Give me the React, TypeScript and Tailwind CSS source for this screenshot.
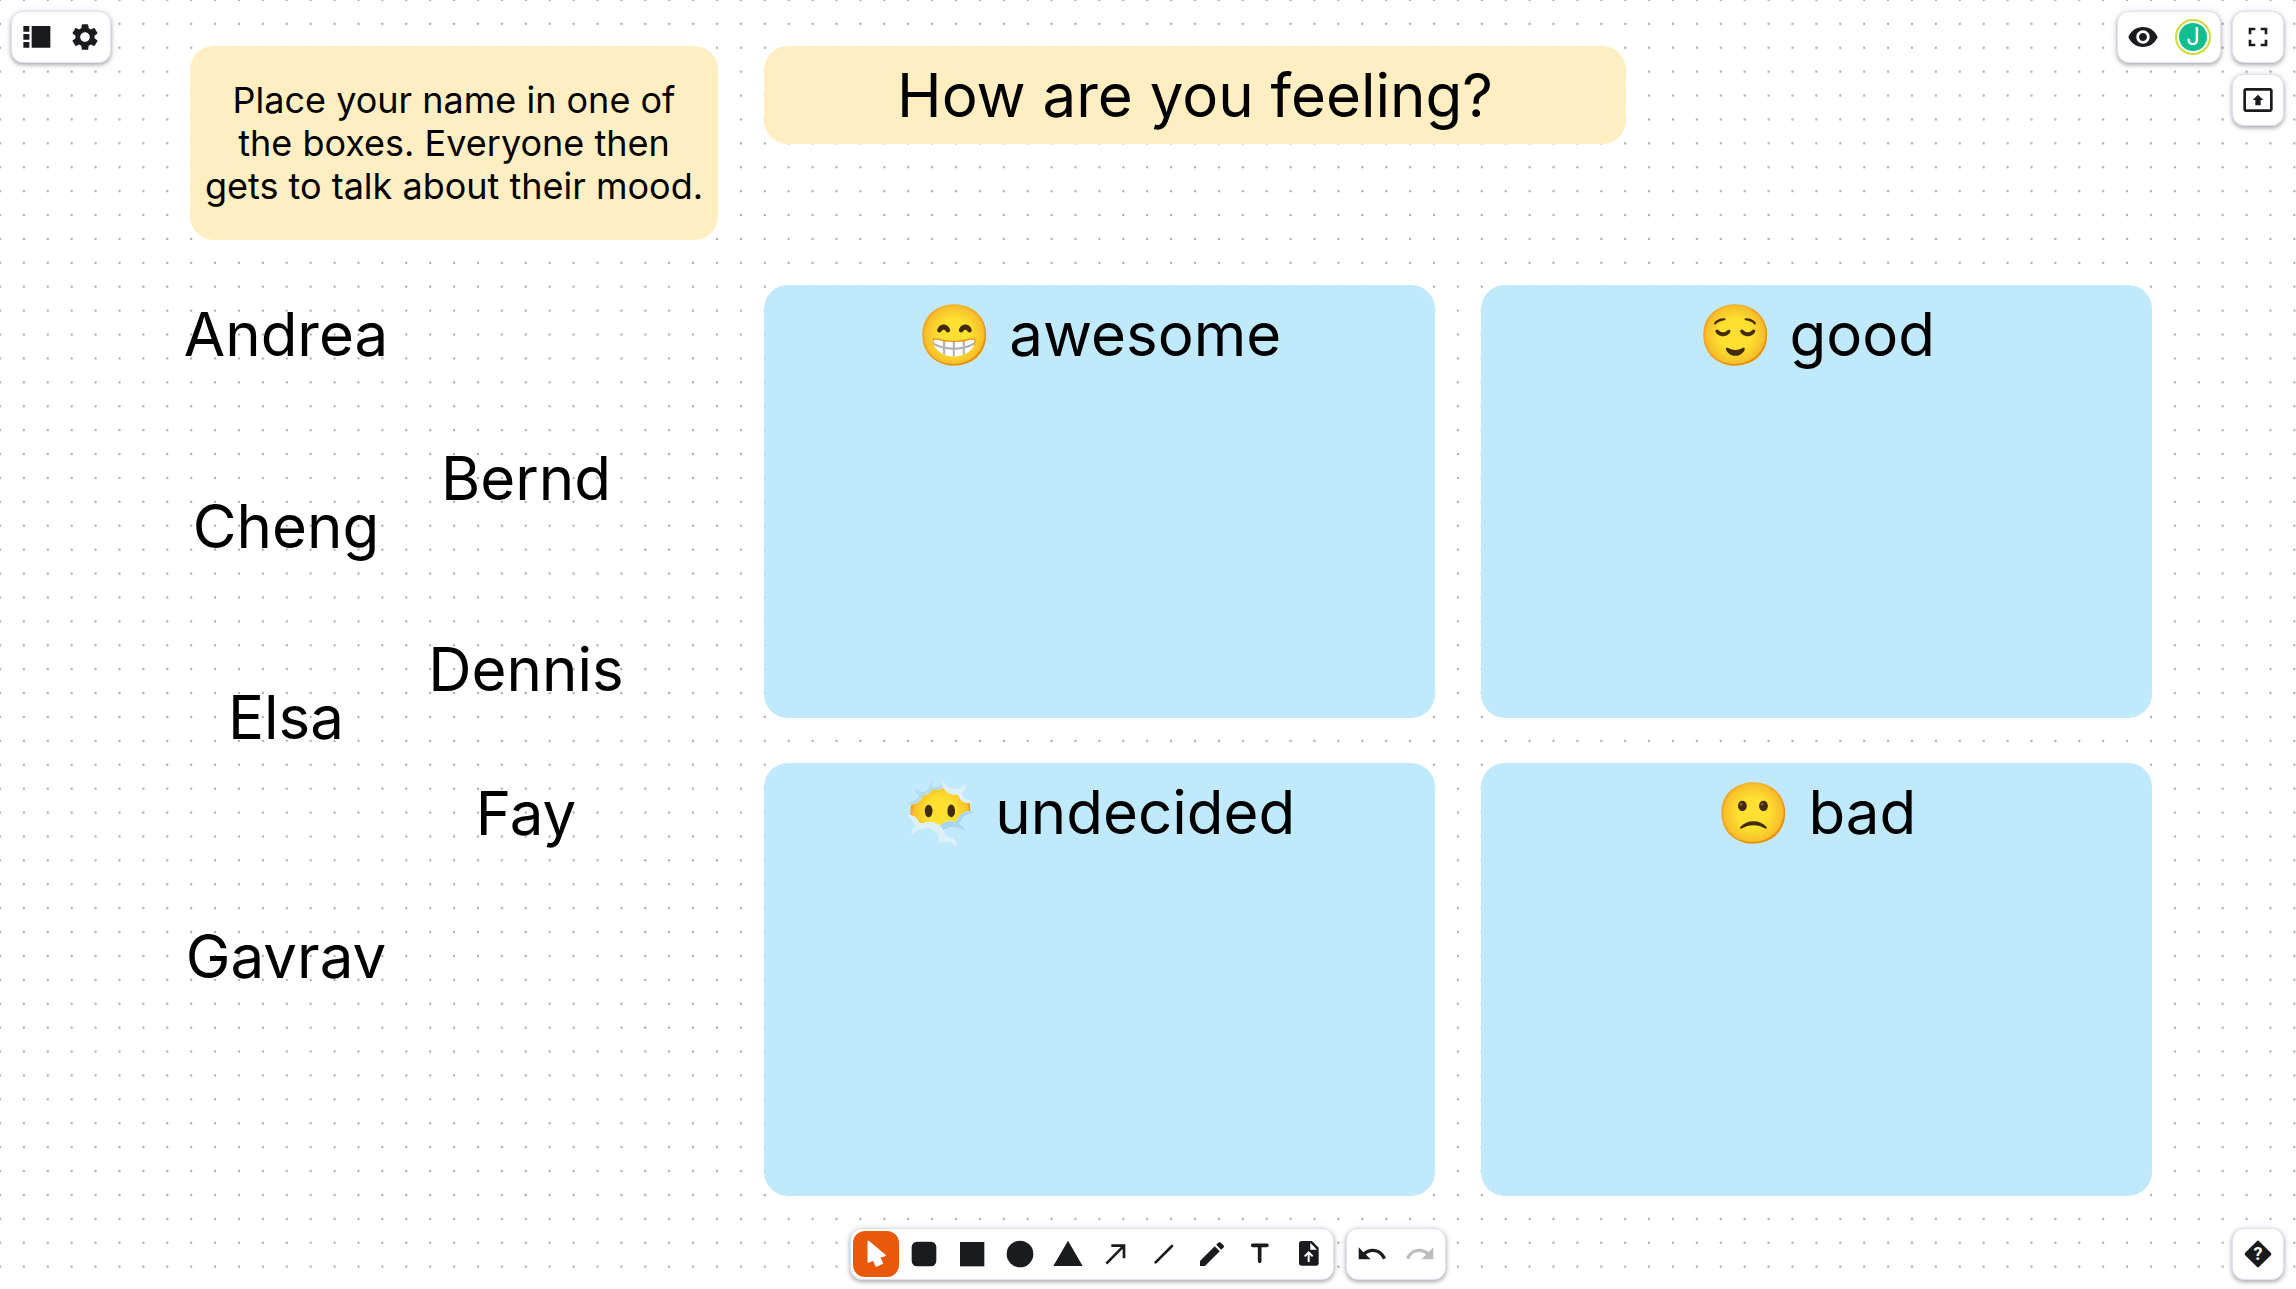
import type { ReactNode } from "react";
import {
  MdEdit,
  MdFullscreen,
  MdOutlinePresentToAll,
  MdRedo,
  MdSettings,
  MdUndo,
  MdVisibility,
} from "react-icons/md";

const names = [
  { name: "Andrea", place: "left-[190px] top-[298px]" },
  { name: "Bernd", place: "left-[430px] top-[442px]" },
  { name: "Cheng", place: "left-[190px] top-[490px]" },
  { name: "Dennis", place: "left-[430px] top-[633px]" },
  { name: "Elsa", place: "left-[190px] top-[681px]" },
  { name: "Fay", place: "left-[430px] top-[777px]" },
  { name: "Gavrav", place: "left-[190px] top-[920px]" },
];

const moods = [
  { emoji: "😁", label: "awesome", place: "left-[764px] top-[285px]" },
  { emoji: "😌", label: "good", place: "left-[1481px] top-[285px]" },
  { emoji: "😶‍🌫️", label: "undecided", place: "left-[764px] top-[763px]" },
  { emoji: "🙁", label: "bad", place: "left-[1481px] top-[763px]" },
];

function Drawing({ children }: { children: ReactNode }) {
  return (
    <svg viewBox="0 0 96 96" className="size-8" fill="currentColor" aria-hidden="true">
      {children}
    </svg>
  );
}

function Panel({ children }: { children: ReactNode }) {
  return (
    <div className="pointer-events-auto flex gap-0.5 rounded-xl border border-[#dee2ef] bg-white p-0.5 shadow-[0_2px_4px_rgba(0,0,0,0.3),0_0_10px_rgba(0,0,0,0.08)]">
      {children}
    </div>
  );
}

function IconButton({
  label,
  active = false,
  disabled = false,
  children,
}: {
  label: string;
  active?: boolean;
  disabled?: boolean;
  children: ReactNode;
}) {
  const tone = active ? "bg-[#e8590c] text-white" : disabled ? "text-[#bdbdbd]" : "text-[#1a1b1e]";
  return (
    <button
      type="button"
      aria-label={label}
      title={label}
      disabled={disabled}
      className={`flex size-[46px] items-center justify-center rounded-xl ${tone}`}
    >
      {children}
    </button>
  );
}

function DotGrid() {
  return (
    <svg className="absolute inset-0 size-full" aria-hidden="true">
      <defs>
        <pattern
          id="dots"
          width="239"
          height="239"
          patternUnits="userSpaceOnUse"
          patternTransform="translate(-12 -12) scale(0.1)"
        >
          <circle cx="120" cy="120" r="12" fill="#acacac" />
        </pattern>
      </defs>
      <rect width="100%" height="100%" fill="url(#dots)" />
    </svg>
  );
}

function Board() {
  return (
    <main className="absolute inset-0 text-[60px] leading-[72px]">
      <p className="absolute left-[190px] top-[46px] flex h-[194px] w-[528px] items-center justify-center rounded-3xl bg-[#ffeec2] px-3 text-center text-[36px] leading-[43px]">
        Place your name in one of the boxes. Everyone then gets to talk about their mood.
      </p>
      <h1 className="absolute left-[764px] top-[46px] flex h-[98px] w-[862px] items-center justify-center rounded-3xl bg-[#ffeec2]">
        How are you feeling?
      </h1>
      {names.map(({ name, place }) => (
        <div key={name} className={`absolute w-48 text-center ${place}`}>
          <span className="-mx-4 whitespace-nowrap">{name}</span>
        </div>
      ))}
      {moods.map(({ emoji, label, place }) => (
        <section
          key={label}
          className={`absolute h-[433px] w-[671px] rounded-3xl bg-[#c0e9fb] pt-[13px] text-center ${place}`}
        >
          <h2>
            {emoji} {label}
          </h2>
        </section>
      ))}
    </main>
  );
}

export default function App() {
  return (
    <div className="relative h-screen overflow-hidden bg-white font-['Inter','Noto_Color_Emoji',sans-serif] text-black">
      <DotGrid />
      <Board />
      <div className="pointer-events-none absolute inset-0 flex flex-col justify-between pt-[11px] pr-3 pb-[9px] pl-[11px]">
        <header className="flex items-start justify-between">
          <Panel>
            <IconButton label="Boards">
              <Drawing>
                <path d="M7 15h18v17H7zM7 39h18v17H7zM7 63h18v17H7zM32 15h56v65H32z" />
              </Drawing>
            </IconButton>
            <IconButton label="Settings">
              <MdSettings className="size-8" />
            </IconButton>
          </Panel>
          <div className="flex items-start gap-[11px]">
            <Panel>
              <IconButton label="Visibility">
                <MdVisibility className="size-8" />
              </IconButton>
              <button type="button" aria-label="User J" className="flex h-[46px] w-[50px] items-center justify-center">
                <span className="flex size-9 items-center justify-center rounded-full border-2 border-[#cddc39] bg-white p-0.5">
                  <span className="flex size-7 items-center justify-center rounded-full bg-[#10bf8e] text-[24px] leading-7 text-white">
                    J
                  </span>
                </span>
              </button>
            </Panel>
            <div className="flex flex-col gap-[11px]">
              <Panel>
                <IconButton label="Fullscreen">
                  <MdFullscreen className="size-8" />
                </IconButton>
              </Panel>
              <Panel>
                <IconButton label="Present">
                  <MdOutlinePresentToAll className="size-8" />
                </IconButton>
              </Panel>
            </div>
          </div>
        </header>
        <footer className="grid grid-cols-[1fr_auto_1fr] items-end">
          <div className="col-start-2 flex gap-3">
            <Panel>
              <IconButton label="Select" active>
                <Drawing>
                  <path
                    d="M25 10v62l15-7 9 19 18-8-9-19 17-5z"
                    stroke="currentColor"
                    strokeWidth="5"
                    strokeLinejoin="round"
                  />
                </Drawing>
              </IconButton>
              <IconButton label="Rounded rectangle">
                <Drawing>
                  <rect x="11" y="11" width="74" height="74" rx="16" />
                </Drawing>
              </IconButton>
              <IconButton label="Rectangle">
                <Drawing>
                  <rect x="12" y="12" width="73" height="73" />
                </Drawing>
              </IconButton>
              <IconButton label="Circle">
                <Drawing>
                  <circle cx="48" cy="48" r="40" />
                </Drawing>
              </IconButton>
              <IconButton label="Triangle">
                <Drawing>
                  <path d="M48 8 92 84H4z" />
                </Drawing>
              </IconButton>
              <IconButton label="Arrow">
                <Drawing>
                  <path d="M19 77 72 23M34 23h38v38" fill="none" stroke="currentColor" strokeWidth="8" />
                </Drawing>
              </IconButton>
              <IconButton label="Line">
                <Drawing>
                  <path d="M23 73 72 24" stroke="currentColor" strokeWidth="8" strokeLinecap="round" />
                </Drawing>
              </IconButton>
              <IconButton label="Draw">
                <MdEdit className="size-8" />
              </IconButton>
              <IconButton label="Text">
                <Drawing>
                  <path
                    d="M26 22h43M47 22v48"
                    fill="none"
                    stroke="currentColor"
                    strokeWidth="11"
                    strokeLinecap="round"
                  />
                </Drawing>
              </IconButton>
              <IconButton label="Upload file">
                <Drawing>
                  <path d="M29 9h31l20 20v47a7 7 0 0 1-7 7H28a7 7 0 0 1-7-7V17a8 8 0 0 1 8-8z" />
                  <path d="M55 14v21h20z" fill="white" />
                  <path
                    d="M38 55l12-12 12 12M50 45v27"
                    fill="none"
                    stroke="white"
                    strokeWidth="6"
                  />
                </Drawing>
              </IconButton>
            </Panel>
            <Panel>
              <IconButton label="Undo">
                <MdUndo className="size-8" />
              </IconButton>
              <IconButton label="Redo" disabled>
                <MdRedo className="size-8" />
              </IconButton>
            </Panel>
          </div>
          <div className="flex justify-end">
            <Panel>
              <IconButton label="Help">
                <Drawing>
                  <path
                    d="M48 13 83 48 48 83 13 48z"
                    stroke="currentColor"
                    strokeWidth="10"
                    strokeLinejoin="round"
                  />
                  <text
                    x="48"
                    y="67"
                    textAnchor="middle"
                    className="fill-white font-['Roboto',sans-serif] text-[54px] font-bold"
                  >
                    ?
                  </text>
                </Drawing>
              </IconButton>
            </Panel>
          </div>
        </footer>
      </div>
    </div>
  );
}
